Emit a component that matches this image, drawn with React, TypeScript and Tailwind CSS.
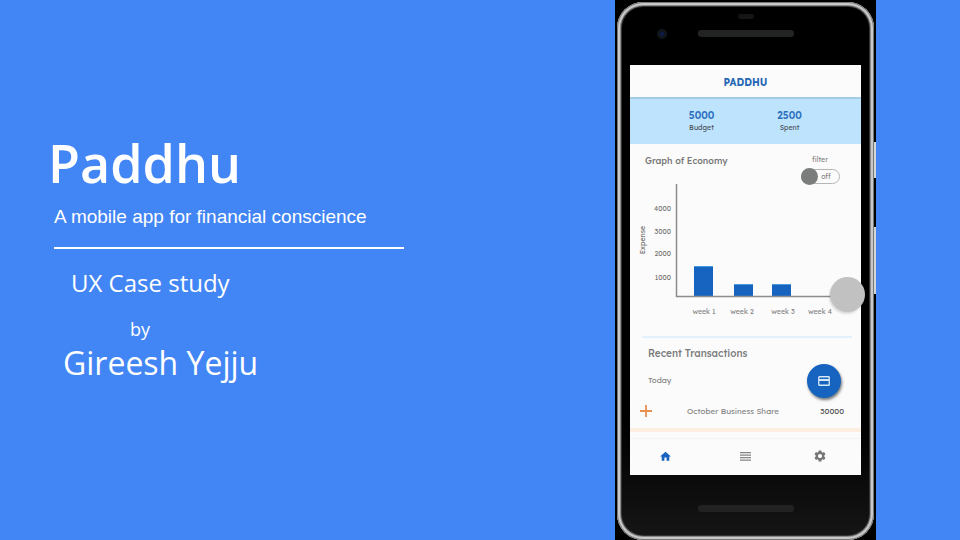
import React from "react";
import { MdHome, MdSettings } from "react-icons/md";

const yTicks = [
  { label: "4000", y: 28 },
  { label: "3000", y: 51 },
  { label: "2000", y: 73 },
  { label: "1000", y: 97 },
];

const bars = [
  { label: "week 1", x: 64, height: 30, labelX: 74 },
  { label: "week 2", x: 104, height: 12, labelX: 112 },
  { label: "week 3", x: 142, height: 12, labelX: 153 },
  { label: "week 4", x: 180, height: 0, labelX: 190 },
];

function ExpenseChart() {
  return (
    <svg
      viewBox="0 0 231 140"
      role="img"
      aria-label="Expense per week"
      className="block w-full text-[7px]"
    >
      <text
        x="15"
        y="60"
        textAnchor="middle"
        transform="rotate(-90 15 60)"
        fill="#707070"
      >
        Expense
      </text>
      {yTicks.map((t) => (
        <text key={t.label} x="41" y={t.y + 3} textAnchor="end" fill="#757575">
          {t.label}
        </text>
      ))}
      {bars.map((b) => (
        <g key={b.label}>
          {b.height > 0 && (
            <>
              <rect x={b.x} y={116 - b.height} width="19" height={b.height} fill="#1763c0" />
              <rect x={b.x} y={116 - b.height} width="19" height="1" fill="#4a9bdc" />
            </>
          )}
          <text x={b.labelX} y="134" textAnchor="middle" fill="#858585">
            {b.label}
          </text>
        </g>
      ))}
      <path d="M46.5 4V116.5H205" fill="none" stroke="#8c8c8c" strokeWidth="1.5" />
    </svg>
  );
}

function Stat({ value, label }: { value: string; label: string }) {
  return (
    <div className="flex w-[88px] flex-col items-center">
      <span className="text-[10px] leading-[14px] font-semibold text-[#2b6fbd]">{value}</span>
      <span className="text-[7px] leading-[10px] text-[#4a5258]">{label}</span>
    </div>
  );
}

function AppScreen() {
  return (
    <div className="relative flex h-[410px] flex-col bg-[#fbfbfb] font-['Lexend','Inter',sans-serif]">
      <header className="flex h-[34px] items-center justify-center border-b-2 border-[#a3cbe4] pt-[4px]">
        <h2 className="text-[10px] leading-[14px] font-bold text-[#2467b5]">PADDHU</h2>
      </header>
      <section className="flex h-[45px] items-start justify-center bg-[#bde3fd] pt-[10px]">
        <Stat value="5000" label="Budget" />
        <Stat value="2500" label="Spent" />
      </section>

      <section className="relative">
        <h3 className="pt-[10px] pl-[15px] text-[9px] leading-[14px] font-medium text-[#777]">
          Graph of Economy
        </h3>
        <label className="absolute top-[11px] right-[21px] flex w-[40px] flex-col items-center text-[7px] leading-[10px] text-[#858585]">
          filter
          <input type="checkbox" className="peer sr-only" />
          <span className="relative mt-[4px] flex h-[15px] w-[39px] items-center justify-center rounded-full border border-[#b5b5b5] pl-[12px]">
            off
            <span className="absolute -top-[2px] -left-[1px] size-[17px] rounded-full bg-[#7b7d7c]" />
          </span>
        </label>
        <div className="mt-[12px]">
          <ExpenseChart />
        </div>
        <span
          aria-hidden="true"
          className="absolute top-[133px] -right-[4px] size-[35px] rounded-full bg-[#c1c1c1] shadow-[-1px_2px_2px_#00000022]"
        />
      </section>

      <hr className="mr-[9px] ml-[12px] mt-[16px] border-t-2 border-[#e2f1fb]" />

      <section className="relative flex flex-1 flex-col">
        <h3 className="pt-[9px] pl-[18px] text-[10px] leading-[14px] font-medium text-[#7c7c7c]">
          Recent Transactions
        </h3>
        <p className="pt-[14px] pl-[18px] text-[8px] leading-[10px] text-[#858585]">Today</p>
        <button
          type="button"
          aria-label="Add payment"
          className="absolute top-[26px] right-[20px] flex size-[34px] items-center justify-center rounded-full bg-[#1763c0] shadow-[1px_2px_3px_#00000088]"
        >
          <svg viewBox="0 0 12 10" className="h-[10px] w-[12px]" aria-hidden="true">
            <rect x="0.75" y="0.75" width="10.5" height="8.5" rx="0.6" fill="none" stroke="#d6e8f8" strokeWidth="1.3" />
            <path d="M1 4H11" stroke="#d6e8f8" strokeWidth="2" />
          </svg>
        </button>
        <div className="mt-[19px] flex items-center pr-[17px] pl-[10px] text-[8px] leading-[14px]">
          <svg viewBox="0 0 12 12" className="size-[12px]" aria-hidden="true">
            <path d="M6 0V12M0 6H12" stroke="#e8904f" strokeWidth="1.8" />
          </svg>
          <span className="flex-1 pl-[35px] text-[#858585]">October Business Share</span>
          <span className="text-[#4d4d4d]">30000</span>
        </div>
        <div className="mt-[10px] h-[4px] bg-[#fdeee2]" />
      </section>

      <nav className="grid h-[37px] grid-cols-3 border-t border-[#f3f3f3] pb-[2px] text-[#757575]">
        <a href="#home" aria-label="Home" className="flex items-center justify-center pr-[6px] text-[13px] text-[#1763c0]">
          <MdHome />
        </a>
        <a href="#list" aria-label="Transactions" className="flex items-center justify-center">
          <svg viewBox="0 0 11 9" className="h-[9px] w-[11px]" aria-hidden="true">
            <path d="M0 0.7H11M0 3.2H11M0 5.7H11M0 8.2H11" stroke="#858585" strokeWidth="1.3" />
          </svg>
        </a>
        <a href="#settings" aria-label="Settings" className="flex items-center justify-center pr-[6px] text-[14px]">
          <MdSettings />
        </a>
      </nav>
    </div>
  );
}

function Phone() {
  return (
    <div className="relative h-screen w-[261px] shrink-0 bg-black px-[2px] pt-[2px]">
      <span className="absolute top-[142px] right-0 h-[36px] w-[3px] bg-[#d3d3d3]" />
      <span className="absolute top-[227px] right-0 h-[67px] w-[3px] bg-[#d3d3d3]" />
      <div className="relative flex h-[538px] flex-col rounded-[26px] bg-linear-to-b from-black from-70% via-[#0a0a0a] via-88% to-[#161616] px-[13px] shadow-[inset_0_0_0_1px_#777,inset_0_0_0_3px_#c9c9c9,inset_0_0_0_4px_#8a8a8a,inset_0_0_0_5px_#333]">
        <div className="relative flex h-[63px] flex-col items-center">
          <span className="mt-[12px] h-[5px] w-[16px] rounded-full bg-[#151515]" />
          <span className="mt-[11px] h-[7px] w-[96px] rounded-[3px] bg-[#222423]" />
          <span className="absolute top-[27px] left-[27px] size-[10px] rounded-full border-[3px] border-[#11151c] bg-[#0c1c4c]" />
        </div>
        <AppScreen />
        <div className="flex flex-1 justify-center pt-[30px]">
          <span className="h-[7px] w-[96px] rounded-[3px] bg-[#222]" />
        </div>
      </div>
    </div>
  );
}

export default function App() {
  return (
    <main className="flex min-h-screen items-start justify-between bg-[#4285f4] pr-[84px] text-white">
      <section className="flex flex-1 flex-col pt-[131px] pl-[48px] font-['Open_Sans',sans-serif]">
        <h1 className="text-[52px] leading-[64px] font-semibold">Paddhu</h1>
        <p className="mt-[10px] pl-[6px] font-['Liberation_Sans',Arial,sans-serif] text-[19px] leading-[24px]">
          A mobile app for financial conscience
        </p>
        <hr className="mt-[18px] ml-[6px] w-[350px] border-t-2 border-white" />
        <p className="mt-[18px] pl-[23px] text-[24px] leading-[32px]">UX Case study</p>
        <p className="mt-[18px] pl-[82px] text-[18px] leading-[24px]">by</p>
        <p className="mt-[2px] pl-[15px] text-[32px] leading-[40px]">Gireesh Yejju</p>
      </section>
      <Phone />
    </main>
  );
}
